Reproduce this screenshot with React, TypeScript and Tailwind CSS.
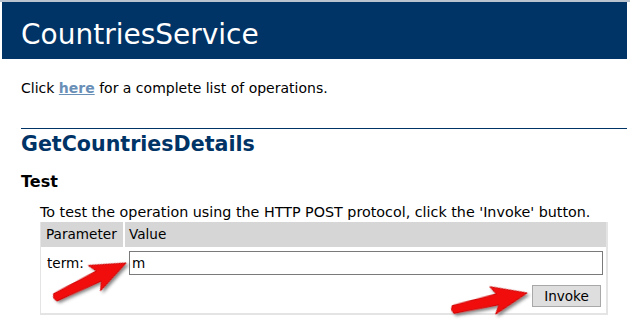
import React from "react";

// Red callout arrow, drawn pointing right and rotated into place
function Arrow({ x1, y1, x2, y2 }: { x1: number; y1: number; x2: number; y2: number }) {
  const dx = x2 - x1;
  const dy = y2 - y1;
  const len = Math.sqrt(dx * dx + dy * dy);
  const ang = (Math.atan2(dy, dx) * 180) / Math.PI;
  const h = 30; // head length
  const d = `M0,-3.5 L${len - h},-5.5 L${len - h - 5},-14 L${len},0 L${len - h - 5},14 L${len - h},5.5 L0,4.5 Q-3,0 0,-3.5 Z`;
  return (
    <g transform={`translate(${x1},${y1}) rotate(${ang})`}>
      <path d={d} fill="#f20f0f" stroke="#d00000" strokeWidth="1" strokeLinejoin="round" filter="url(#shadow)" />
    </g>
  );
}

export default function App() {
  return (
    <div className="relative w-[630px] h-[327px] overflow-hidden bg-white font-['Verdana','DejaVu_Sans',sans-serif] text-[14px] text-black">
      <div className="h-[2px] bg-[#b9c3d0]" />
      <div className="ml-[2px] mr-[3px] h-[57px] bg-[#003366] pl-[19px] pt-[15px] text-[28px] leading-[36px] text-white">
        CountriesService
      </div>

      <p className="ml-[21px] mt-[20px] leading-[18px]">
        Click{" "}
        <a className="font-bold text-[#6a8fb7] underline" href="#">
          here
        </a>{" "}
        for a complete list of operations.
      </p>

      <div className="ml-[21px] mr-[3px] mt-[31px] border-t border-[#003366]" />
      <h2 className="ml-[21px] mt-[2px] text-[20.6px] font-bold leading-[26px] text-[#003366]">GetCountriesDetails</h2>

      <h3 className="ml-[21px] mt-[15px] text-[16px] font-bold leading-[20px]">Test</h3>

      <p className="ml-[40px] mt-[12px] text-[14.3px] leading-[16px]">
        To test the operation using the HTTP POST protocol, click the 'Invoke' button.
      </p>

      <div className="ml-[40px] mt-[2px] w-[568px] border-b-2 border-r-2 border-l border-[#e4e4e4] text-[13.6px]">
        <div className="flex h-[25px] gap-[2px]">
          <div className="flex w-[82px] items-center bg-[#d6d6d6] pl-[5px]">Parameter</div>
          <div className="flex flex-1 items-center bg-[#d6d6d6] pl-[4px]">Value</div>
        </div>
        <div className="flex h-[32px] items-center">
          <div className="w-[88px] pl-[6px]">term:</div>
          <div className="flex h-[24px] w-[474px] items-center border border-[#7a7a7a] pl-[2px]">m</div>
        </div>
        <div className="flex h-[34px] justify-end pr-[5px] pt-[6px]">
          <button className="h-[22px] w-[69px] border border-[#a8a8a8] bg-[#dedede] text-center leading-[18px]">
            Invoke
          </button>
        </div>
      </div>

      <svg className="pointer-events-none absolute left-0 top-0" width="630" height="327">
        <defs>
          <filter id="shadow" x="-20%" y="-50%" width="140%" height="200%">
            <feDropShadow dx="1.5" dy="2.5" stdDeviation="1.5" floodColor="#333" floodOpacity="0.6" />
          </filter>
        </defs>
        <Arrow x1={55} y1={297} x2={126} y2={263} />
        <Arrow x1={453} y1={309} x2={527} y2={293} />
      </svg>
    </div>
  );
}
